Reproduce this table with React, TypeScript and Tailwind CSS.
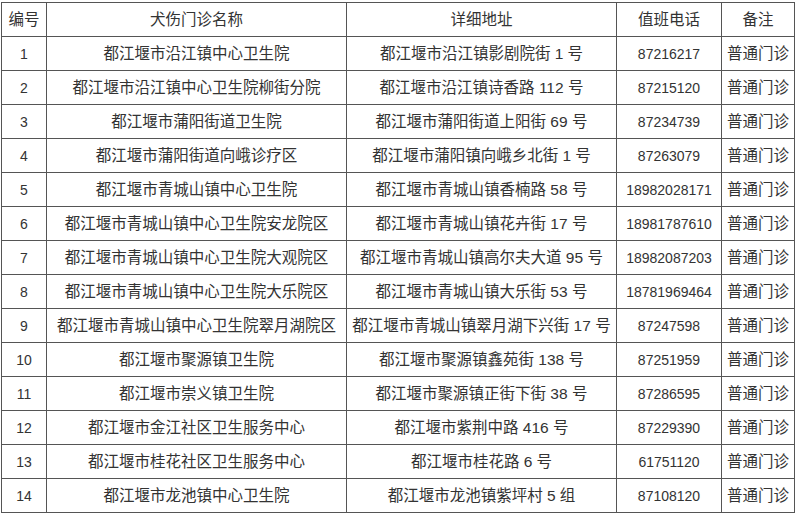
import React from 'react';

type Row = {
  no: number;
  name: string;
  address: string;
  phone: string;
  note: string;
};

const rows: Row[] = [
  { no: 1, name: '都江堰市沿江镇中心卫生院', address: '都江堰市沿江镇影剧院街 1 号', phone: '87216217', note: '普通门诊' },
  { no: 2, name: '都江堰市沿江镇中心卫生院柳街分院', address: '都江堰市沿江镇诗香路 112 号', phone: '87215120', note: '普通门诊' },
  { no: 3, name: '都江堰市蒲阳街道卫生院', address: '都江堰市蒲阳街道上阳街 69 号', phone: '87234739', note: '普通门诊' },
  { no: 4, name: '都江堰市蒲阳街道向峨诊疗区', address: '都江堰市蒲阳镇向峨乡北街 1 号', phone: '87263079', note: '普通门诊' },
  { no: 5, name: '都江堰市青城山镇中心卫生院', address: '都江堰市青城山镇香楠路 58 号', phone: '18982028171', note: '普通门诊' },
  { no: 6, name: '都江堰市青城山镇中心卫生院安龙院区', address: '都江堰市青城山镇花卉街 17 号', phone: '18981787610', note: '普通门诊' },
  { no: 7, name: '都江堰市青城山镇中心卫生院大观院区', address: '都江堰市青城山镇高尔夫大道 95 号', phone: '18982087203', note: '普通门诊' },
  { no: 8, name: '都江堰市青城山镇中心卫生院大乐院区', address: '都江堰市青城山镇大乐街 53 号', phone: '18781969464', note: '普通门诊' },
  { no: 9, name: '都江堰市青城山镇中心卫生院翠月湖院区', address: '都江堰市青城山镇翠月湖下兴街 17 号', phone: '87247598', note: '普通门诊' },
  { no: 10, name: '都江堰市聚源镇卫生院', address: '都江堰市聚源镇鑫苑街 138 号', phone: '87251959', note: '普通门诊' },
  { no: 11, name: '都江堰市崇义镇卫生院', address: '都江堰市聚源镇正街下街 38 号', phone: '87286595', note: '普通门诊' },
  { no: 12, name: '都江堰市金江社区卫生服务中心', address: '都江堰市紫荆中路 416 号', phone: '87229390', note: '普通门诊' },
  { no: 13, name: '都江堰市桂花社区卫生服务中心', address: '都江堰市桂花路 6 号', phone: '61751120', note: '普通门诊' },
  { no: 14, name: '都江堰市龙池镇中心卫生院', address: '都江堰市龙池镇紫坪村 5 组', phone: '87108120', note: '普通门诊' },
];

const cell = 'border border-[#555] text-center align-middle p-0 whitespace-nowrap';

export default function App() {
  return (
    <div
      className="w-[800px] h-[517px] bg-white pt-[2px] pl-[1px] text-[#333] text-[15.5px] leading-none overflow-hidden"
      style={{ fontFamily: '"Liberation Sans", "Noto Sans CJK SC", sans-serif' }}
    >
      <table className="border-collapse table-fixed w-[793px]">
        <colgroup>
          <col className="w-[45px]" />
          <col className="w-[300px]" />
          <col className="w-[270px]" />
          <col className="w-[105px]" />
          <col className="w-[73px]" />
        </colgroup>
        <thead>
          <tr className="h-[34px]">
            <th className={`${cell} font-normal`}>编号</th>
            <th className={`${cell} font-normal`}>犬伤门诊名称</th>
            <th className={`${cell} font-normal`}>详细地址</th>
            <th className={`${cell} font-normal`}>值班电话</th>
            <th className={`${cell} font-normal`}>备注</th>
          </tr>
        </thead>
        <tbody>
          {rows.map((r) => (
            <tr key={r.no} className="h-[34px]">
              <td className={`${cell} text-[14px]`}>{r.no}</td>
              <td className={cell}>{r.name}</td>
              <td className={cell}>{r.address}</td>
              <td className={`${cell} text-[14px]`}>{r.phone}</td>
              <td className={cell}>{r.note}</td>
            </tr>
          ))}
        </tbody>
      </table>
    </div>
  );
}
